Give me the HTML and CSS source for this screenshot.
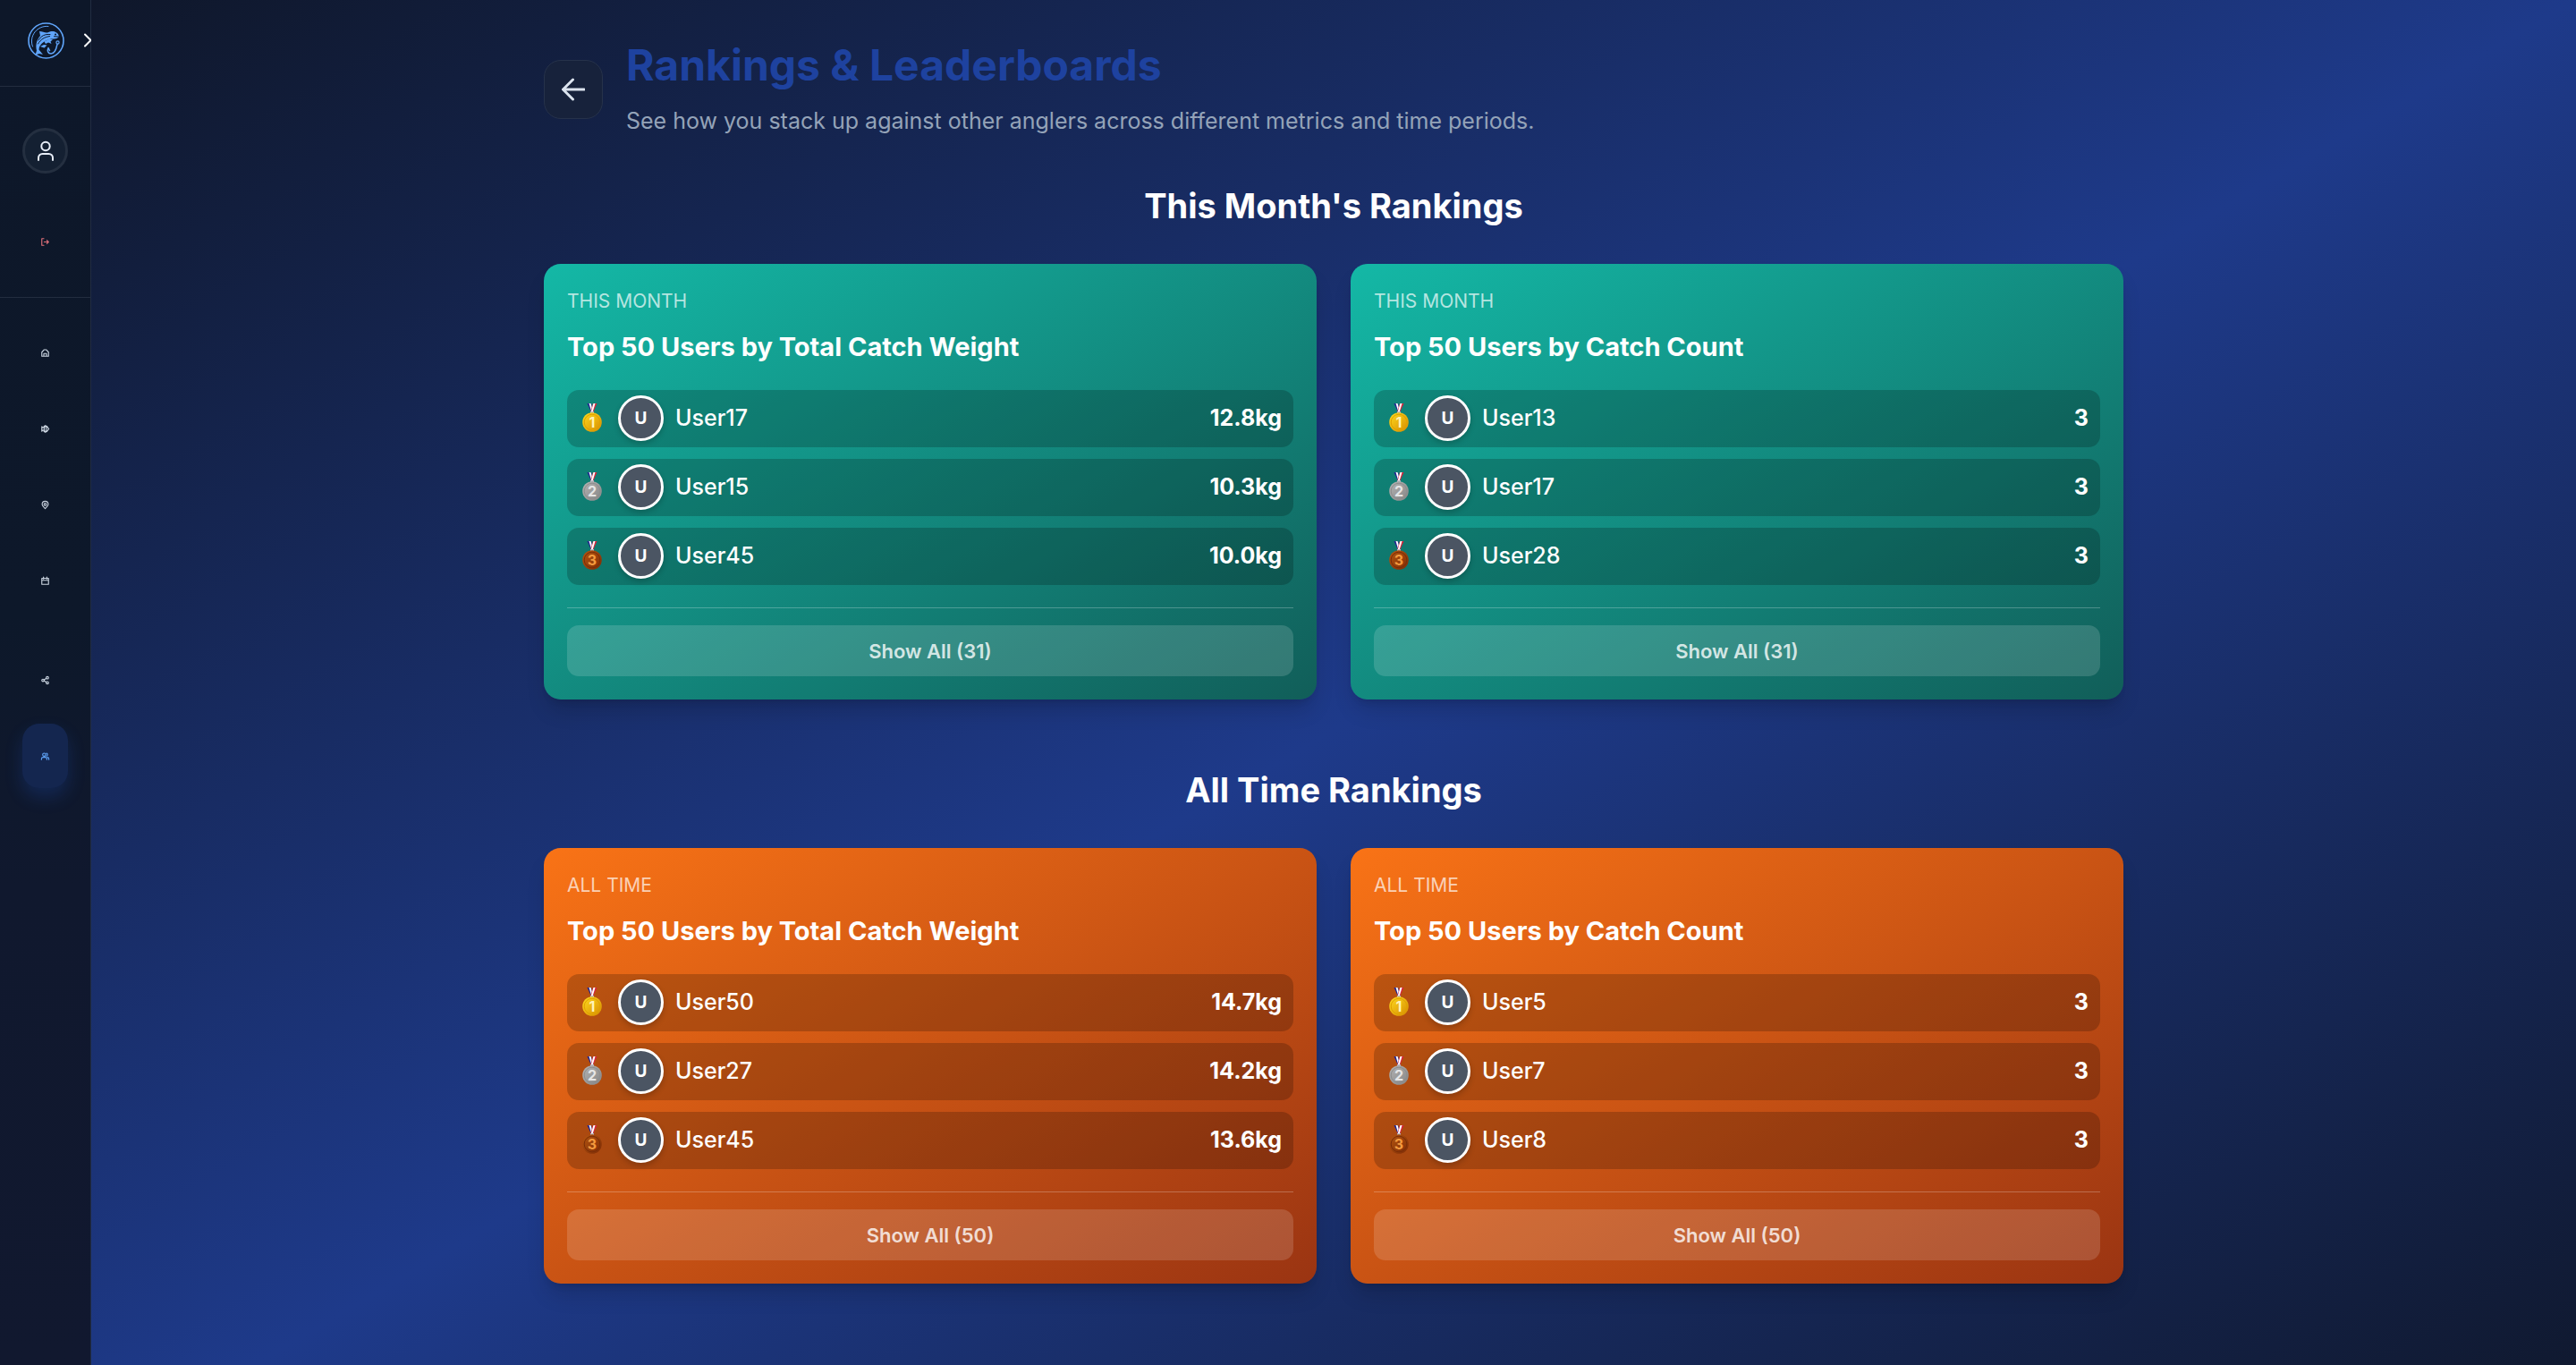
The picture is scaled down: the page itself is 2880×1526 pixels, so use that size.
FILE: index.html
```html
<!DOCTYPE html>
<html lang="en">
<head>
<meta charset="utf-8">
<meta name="viewport" content="width=device-width, initial-scale=1">
<title>Rankings &amp; Leaderboards</title>
<link rel="stylesheet" href="styles.css">
</head>
<body>
<svg class="sprite" aria-hidden="true">
  <defs>
    <linearGradient id="gold" x1="0" y1="0" x2="1" y2="1"><stop offset="0" stop-color="#ffdc1f"/><stop offset="1" stop-color="#d68b00"/></linearGradient>
    <linearGradient id="silver" x1="0" y1="0" x2="1" y2="1"><stop offset="0" stop-color="#b4b4b4"/><stop offset="1" stop-color="#858585"/></linearGradient>
    <linearGradient id="bronze" x1="0" y1="0" x2="1" y2="1"><stop offset="0" stop-color="#b5560f"/><stop offset="1" stop-color="#7e2c06"/></linearGradient>
    <symbol id="ribbon" viewBox="0 0 32 32">
      <path d="M10.500 0h4.500l3 10h-3z" fill="#23248f"/><path d="M12.500 0h2l3 10h-2z" fill="#fff"/>
      <path d="M21.500 0H17l-3 10h3z" fill="#d8243c"/><path d="M19.500 0h-2l-3 10h2z" fill="#fff"/>
      <path d="M14 9h4v2h-4z" fill="#b9b9c4"/>
    </symbol>
    <symbol id="medal-1" viewBox="0 0 32 32"><use href="#ribbon"/><circle cx="16" cy="21" r="10.800" fill="url(#gold)"/><circle cx="16" cy="21" r="8.800" fill="none" stroke="#e0a100"/><text class="medal-digit" x="16" y="27" fill="#fff3b8">1</text></symbol>
    <symbol id="medal-2" viewBox="0 0 32 32"><use href="#ribbon"/><circle cx="16" cy="21" r="10.800" fill="url(#silver)"/><circle cx="16" cy="21" r="8.800" fill="none" stroke="#8d8d8d"/><text class="medal-digit" x="16" y="27" fill="#e6e6e6">2</text></symbol>
    <symbol id="medal-3" viewBox="0 0 32 32"><use href="#ribbon"/><circle cx="16" cy="21" r="10.800" fill="url(#bronze)"/><circle cx="16" cy="21" r="8.800" fill="none" stroke="#7a2d08"/><text class="medal-digit" x="16" y="27" fill="#f39a3e">3</text></symbol>
  </defs>
</svg>

<div class="app">
  <aside class="sidebar">
    <div class="brand">
      <a class="logo" href="#" aria-label="Home page">
        <svg viewBox="0 0 41 41" fill="none" stroke="#60a5fa">
          <circle cx="20.500" cy="20.500" r="19.500" stroke-width="1.600"/>
          <path d="M5.500 27A16.500 16.500 0 0 1 23 4.500" stroke-width="1"/>
          <path d="M13 10c4 0 6 2 9 1.500 3-2 8-2.500 11 .500 1.500 1.500 2 3 1.500 4.500-2 2-5 2-8 2-3 .500-5.500 1.500-8 3-4 2.500-6 5.500-6 9l4.500 5.500-4-1-4.500 1.500 1.500-5c-1.500-6 0-12 4-16.500z" fill="#60a5fa" stroke="none"/>
          <path d="M12 20c3-5 7-7 13-6.500M11.500 24c3-5 7-7.500 13-8.500" stroke="#0d1729" stroke-width="1"/>
          <circle cx="31" cy="13.500" r="1" fill="#0d1729" stroke="none"/>
          <path d="M29.500 15.700l5 .300" stroke="#0d1729" stroke-width="1"/>
          <path d="M18.500 21.500l5-2.500 4.500 0-2.500 2.500 1 2.500-3.500-1.500-3 1.500zM14 27l4-2 3.500.500-3 3z" fill="#60a5fa" stroke="none"/>
          <circle cx="33.500" cy="22.500" r="1.600" stroke-width="1.200"/>
          <path d="M33 24.500c-1 5-3 10.500-7 10.500-3.500 0-4.500-3.500-3-6.500l1.500 3" stroke-width="1.500"/>
        </svg>
      </a>
      <button class="expand" type="button" aria-label="Expand sidebar">
        <svg viewBox="0 0 10 16"><path d="M2 1.500L8.500 8 2 14.500"/></svg>
      </button>
    </div>
    <div class="account">
      <a class="profile" href="#" aria-label="Profile">
        <svg viewBox="0 0 24 24"><circle cx="12" cy="6.500" r="4.700"/><path d="M4 22v-2.500a4.500 4.500 0 0 1 4.500-4.500h7a4.500 4.500 0 0 1 4.500 4.500V22"/></svg>
      </a>
      <button class="item logout" type="button" aria-label="Log out">
        <svg viewBox="0 0 24 24"><path d="M8 22H2V2h6M9 12h13M17 7l5 5-5 5"/></svg>
      </button>
    </div>
    <nav class="nav" aria-label="Main">
      <div class="group">
        <a class="item" href="#" aria-label="Dashboard"><svg viewBox="0 0 24 24"><path d="M2 10l7-7.500h6L22 10v12H2zM8 22v-8h8v8"/></svg></a>
        <a class="item" href="#" aria-label="Catches"><svg viewBox="0 0 24 24"><path d="M2 5l4 4c2-3 5-4 8-4 4 0 7 3 9 7-2 4-5 7-9 7-3 0-6-1-8-4l-4 4V5zM8 5l4-3 6 3M8 19l4 3 6-3M10 8v8M16 8v8"/></svg></a>
        <a class="item" href="#" aria-label="Spots"><svg viewBox="0 0 24 24"><path d="M12 23c-5-5-9-9-9-13a9 9 0 0 1 18 0c0 4-4 8-9 13z"/><circle cx="12" cy="10" r="3.500"/></svg></a>
        <a class="item" href="#" aria-label="Calendar"><svg viewBox="0 0 24 24"><path d="M2 4h20v18H2zM2 10h20M7 0v6M17 0v6"/></svg></a>
      </div>
      <div class="group">
        <a class="item" href="#" aria-label="Share"><svg viewBox="0 0 24 24"><circle cx="18.500" cy="4.500" r="3.500"/><circle cx="5.500" cy="12" r="3.500"/><circle cx="18.500" cy="19.500" r="3.500"/><path d="M8.500 10.500l6.500-4M8.500 13.500l6.500 4"/></svg></a>
        <a class="item active" href="#" aria-label="Rankings" aria-current="page"><svg viewBox="0 0 24 24"><circle cx="9" cy="7" r="4.500"/><path d="M1 22v-2a5 5 0 0 1 5-5h6a5 5 0 0 1 5 5v2M16 3a4.500 4.500 0 0 1 0 8.500M23 22v-2a5 5 0 0 0-4-5"/></svg></a>
      </div>
    </nav>
  </aside>

  <main class="main">
    <div class="container">
      <header class="page-header">
        <button class="back" type="button" aria-label="Go back">
          <svg viewBox="0 0 26 26"><path d="M25 13H2M12.500 2L1.500 13l11 11"/></svg>
        </button>
        <div class="headings">
          <h1>Rankings &amp; Leaderboards</h1>
          <p>See how you stack up against other anglers across different metrics and time periods.</p>
        </div>
      </header>

      <section class="rankings">
        <h2>This Month's Rankings</h2>
        <div class="cards">
          <article class="card teal">
            <p class="period">THIS MONTH</p>
            <h3>Top 50 Users by Total Catch Weight</h3>
            <ol class="rows">
              <li><svg class="medal"><use href="#medal-1"/></svg><span class="avatar">U</span><span class="name">User17</span><span class="value">12.8kg</span></li>
              <li><svg class="medal"><use href="#medal-2"/></svg><span class="avatar">U</span><span class="name">User15</span><span class="value">10.3kg</span></li>
              <li><svg class="medal"><use href="#medal-3"/></svg><span class="avatar">U</span><span class="name">User45</span><span class="value">10.0kg</span></li>
            </ol>
            <div class="more"><button type="button">Show All (31)</button></div>
          </article>
          <article class="card teal">
            <p class="period">THIS MONTH</p>
            <h3>Top 50 Users by Catch Count</h3>
            <ol class="rows">
              <li><svg class="medal"><use href="#medal-1"/></svg><span class="avatar">U</span><span class="name">User13</span><span class="value">3</span></li>
              <li><svg class="medal"><use href="#medal-2"/></svg><span class="avatar">U</span><span class="name">User17</span><span class="value">3</span></li>
              <li><svg class="medal"><use href="#medal-3"/></svg><span class="avatar">U</span><span class="name">User28</span><span class="value">3</span></li>
            </ol>
            <div class="more"><button type="button">Show All (31)</button></div>
          </article>
        </div>
      </section>

      <section class="rankings">
        <h2>All Time Rankings</h2>
        <div class="cards">
          <article class="card orange">
            <p class="period">ALL TIME</p>
            <h3>Top 50 Users by Total Catch Weight</h3>
            <ol class="rows">
              <li><svg class="medal"><use href="#medal-1"/></svg><span class="avatar">U</span><span class="name">User50</span><span class="value">14.7kg</span></li>
              <li><svg class="medal"><use href="#medal-2"/></svg><span class="avatar">U</span><span class="name">User27</span><span class="value">14.2kg</span></li>
              <li><svg class="medal"><use href="#medal-3"/></svg><span class="avatar">U</span><span class="name">User45</span><span class="value">13.6kg</span></li>
            </ol>
            <div class="more"><button type="button">Show All (50)</button></div>
          </article>
          <article class="card orange">
            <p class="period">ALL TIME</p>
            <h3>Top 50 Users by Catch Count</h3>
            <ol class="rows">
              <li><svg class="medal"><use href="#medal-1"/></svg><span class="avatar">U</span><span class="name">User5</span><span class="value">3</span></li>
              <li><svg class="medal"><use href="#medal-2"/></svg><span class="avatar">U</span><span class="name">User7</span><span class="value">3</span></li>
              <li><svg class="medal"><use href="#medal-3"/></svg><span class="avatar">U</span><span class="name">User8</span><span class="value">3</span></li>
            </ol>
            <div class="more"><button type="button">Show All (50)</button></div>
          </article>
        </div>
      </section>
    </div>
  </main>
</div>
</body>
</html>
```
FILE: styles.css
```css
*,
*::before,
*::after {
  box-sizing: border-box;
}

body,
h1,
h2,
h3,
p,
ol {
  margin: 0;
  padding: 0;
}

body {
  background: #0f172a;
  color: #fff;
  font-family: Inter, "Liberation Sans", sans-serif;
  font-size: 25px;
}

button {
  border: 0;
  padding: 0;
  background: none;
  color: inherit;
  font: inherit;
  cursor: pointer;
}

svg {
  display: block;
  flex: none;
}

.sprite {
  position: absolute;
  width: 0;
  height: 0;
}

.app {
  display: grid;
  grid-template-columns: 102px 1fr;
  min-height: 100vh;
}

/* Sidebar */

.sidebar {
  border-right: 1px solid #212c42;
  background: linear-gradient(#0d1729, #0d182a 45%, #10182e 65%, #11182f);
}

.sidebar svg {
  fill: none;
  stroke: currentColor;
  stroke-linecap: round;
  stroke-linejoin: round;
}

.brand {
  display: flex;
  align-items: center;
  gap: 21px;
  height: 97px;
  padding: 0 0 6px 31px;
  border-bottom: 1px solid #232d3f;
}

.sidebar .logo svg {
  width: 41px;
  height: 41px;
  stroke: #60a5fa;
}

.expand svg {
  width: 10px;
  height: 16px;
  stroke-width: 2;
}

.account {
  display: flex;
  flex-direction: column;
  align-items: center;
  gap: 40px;
  padding: 46px 0 26px;
  border-bottom: 1px solid #232d3f;
}

.profile {
  display: grid;
  place-items: center;
  width: 51px;
  height: 51px;
  border: 3px solid #242f40;
  border-radius: 50%;
  background: #142032;
  color: #e8eef8;
}

.profile svg {
  width: 24px;
  height: 24px;
  stroke-width: 2;
}

.nav {
  display: flex;
  flex-direction: column;
  gap: 39px;
  padding: 25px 0;
}

.group {
  display: flex;
  flex-direction: column;
  align-items: center;
  gap: 13px;
}

.item {
  display: grid;
  place-items: center;
  width: 51px;
  height: 72px;
  border-radius: 19px;
  color: #cbd5e1;
}

.sidebar .item svg {
  width: 9px;
  height: 9px;
  overflow: visible;
  stroke-width: 3;
}

.logout {
  color: #e0707a;
}

.active {
  background: #14264f;
  color: #60a5fa;
  box-shadow: 0 10px 20px rgba(37, 99, 235, 0.2);
}

/* Page */

.main {
  padding: 46px 38px 90px;
  background: linear-gradient(to bottom right, #0f172a, #1e3a8a 50%, #0f172a) no-repeat;
  background-size: 100% 107%;
}

.container {
  max-width: 1766px;
  margin: 0 auto;
}

.page-header {
  display: flex;
  align-items: center;
  gap: 26px;
  margin-bottom: 53px;
}

.back {
  display: grid;
  place-items: center;
  width: 66px;
  height: 66px;
  border: 1px solid #26324a;
  border-radius: 19px;
  background: #17223b;
  color: #dbe3ee;
}

.back svg {
  width: 26px;
  height: 26px;
  fill: none;
  stroke: currentColor;
  stroke-width: 3;
  stroke-linecap: round;
  stroke-linejoin: round;
}

h1 {
  margin-bottom: 16px;
  color: #1e429f;
  font-size: 48px;
  font-weight: 700;
  line-height: 54px;
}

.headings p {
  color: #94a3b8;
  line-height: 38px;
}

.rankings + .rankings {
  margin-top: 78px;
}

h2 {
  margin-bottom: 42px;
  font-size: 38px;
  font-weight: 700;
  line-height: 46px;
  text-align: center;
}

.cards {
  display: grid;
  grid-template-columns: 1fr 1fr;
  gap: 38px;
}

.card {
  padding: 26px;
  border-radius: 19px;
  box-shadow: 0 16px 24px -5px rgba(0, 0, 0, 0.16), 0 6px 10px -6px rgba(0, 0, 0, 0.16);
}

.teal {
  background: linear-gradient(to bottom right, #14b8a6, #115e59);
}

.orange {
  background: linear-gradient(to bottom right, #f97316, #9a3412);
}

.period {
  margin-bottom: 17px;
  color: rgba(255, 255, 255, 0.7);
  font-size: 21px;
  line-height: 32px;
}

h3 {
  margin-bottom: 30px;
  font-size: 29px;
  font-weight: 700;
  line-height: 36px;
}

.rows {
  display: flex;
  flex-direction: column;
  gap: 13px;
  list-style: none;
}

.rows li {
  display: flex;
  align-items: center;
  gap: 13px;
  height: 64px;
  padding: 0 13px 2px 12px;
  border-radius: 13px;
  background: rgba(0, 0, 0, 0.2);
}

.medal {
  width: 32px;
  height: 32px;
}

.medal-digit {
  font-size: 16px;
  font-weight: 700;
  text-anchor: middle;
}

.avatar {
  display: grid;
  place-items: center;
  width: 51px;
  height: 51px;
  border: 3px solid #fff;
  border-radius: 50%;
  background: #4b5563;
  box-shadow: 0 3px 6px rgba(0, 0, 0, 0.2);
  font-size: 19px;
  font-weight: 700;
}

.name {
  flex: 1;
  font-weight: 500;
}

.value {
  font-weight: 700;
}

.more {
  margin-top: 25px;
  padding-top: 19px;
  border-top: 1px solid rgba(255, 255, 255, 0.25);
}

.more button {
  width: 100%;
  height: 57px;
  border-radius: 13px;
  background: rgba(255, 255, 255, 0.15);
  color: rgba(255, 255, 255, 0.8);
  font-size: 22px;
  font-weight: 600;
}
```
